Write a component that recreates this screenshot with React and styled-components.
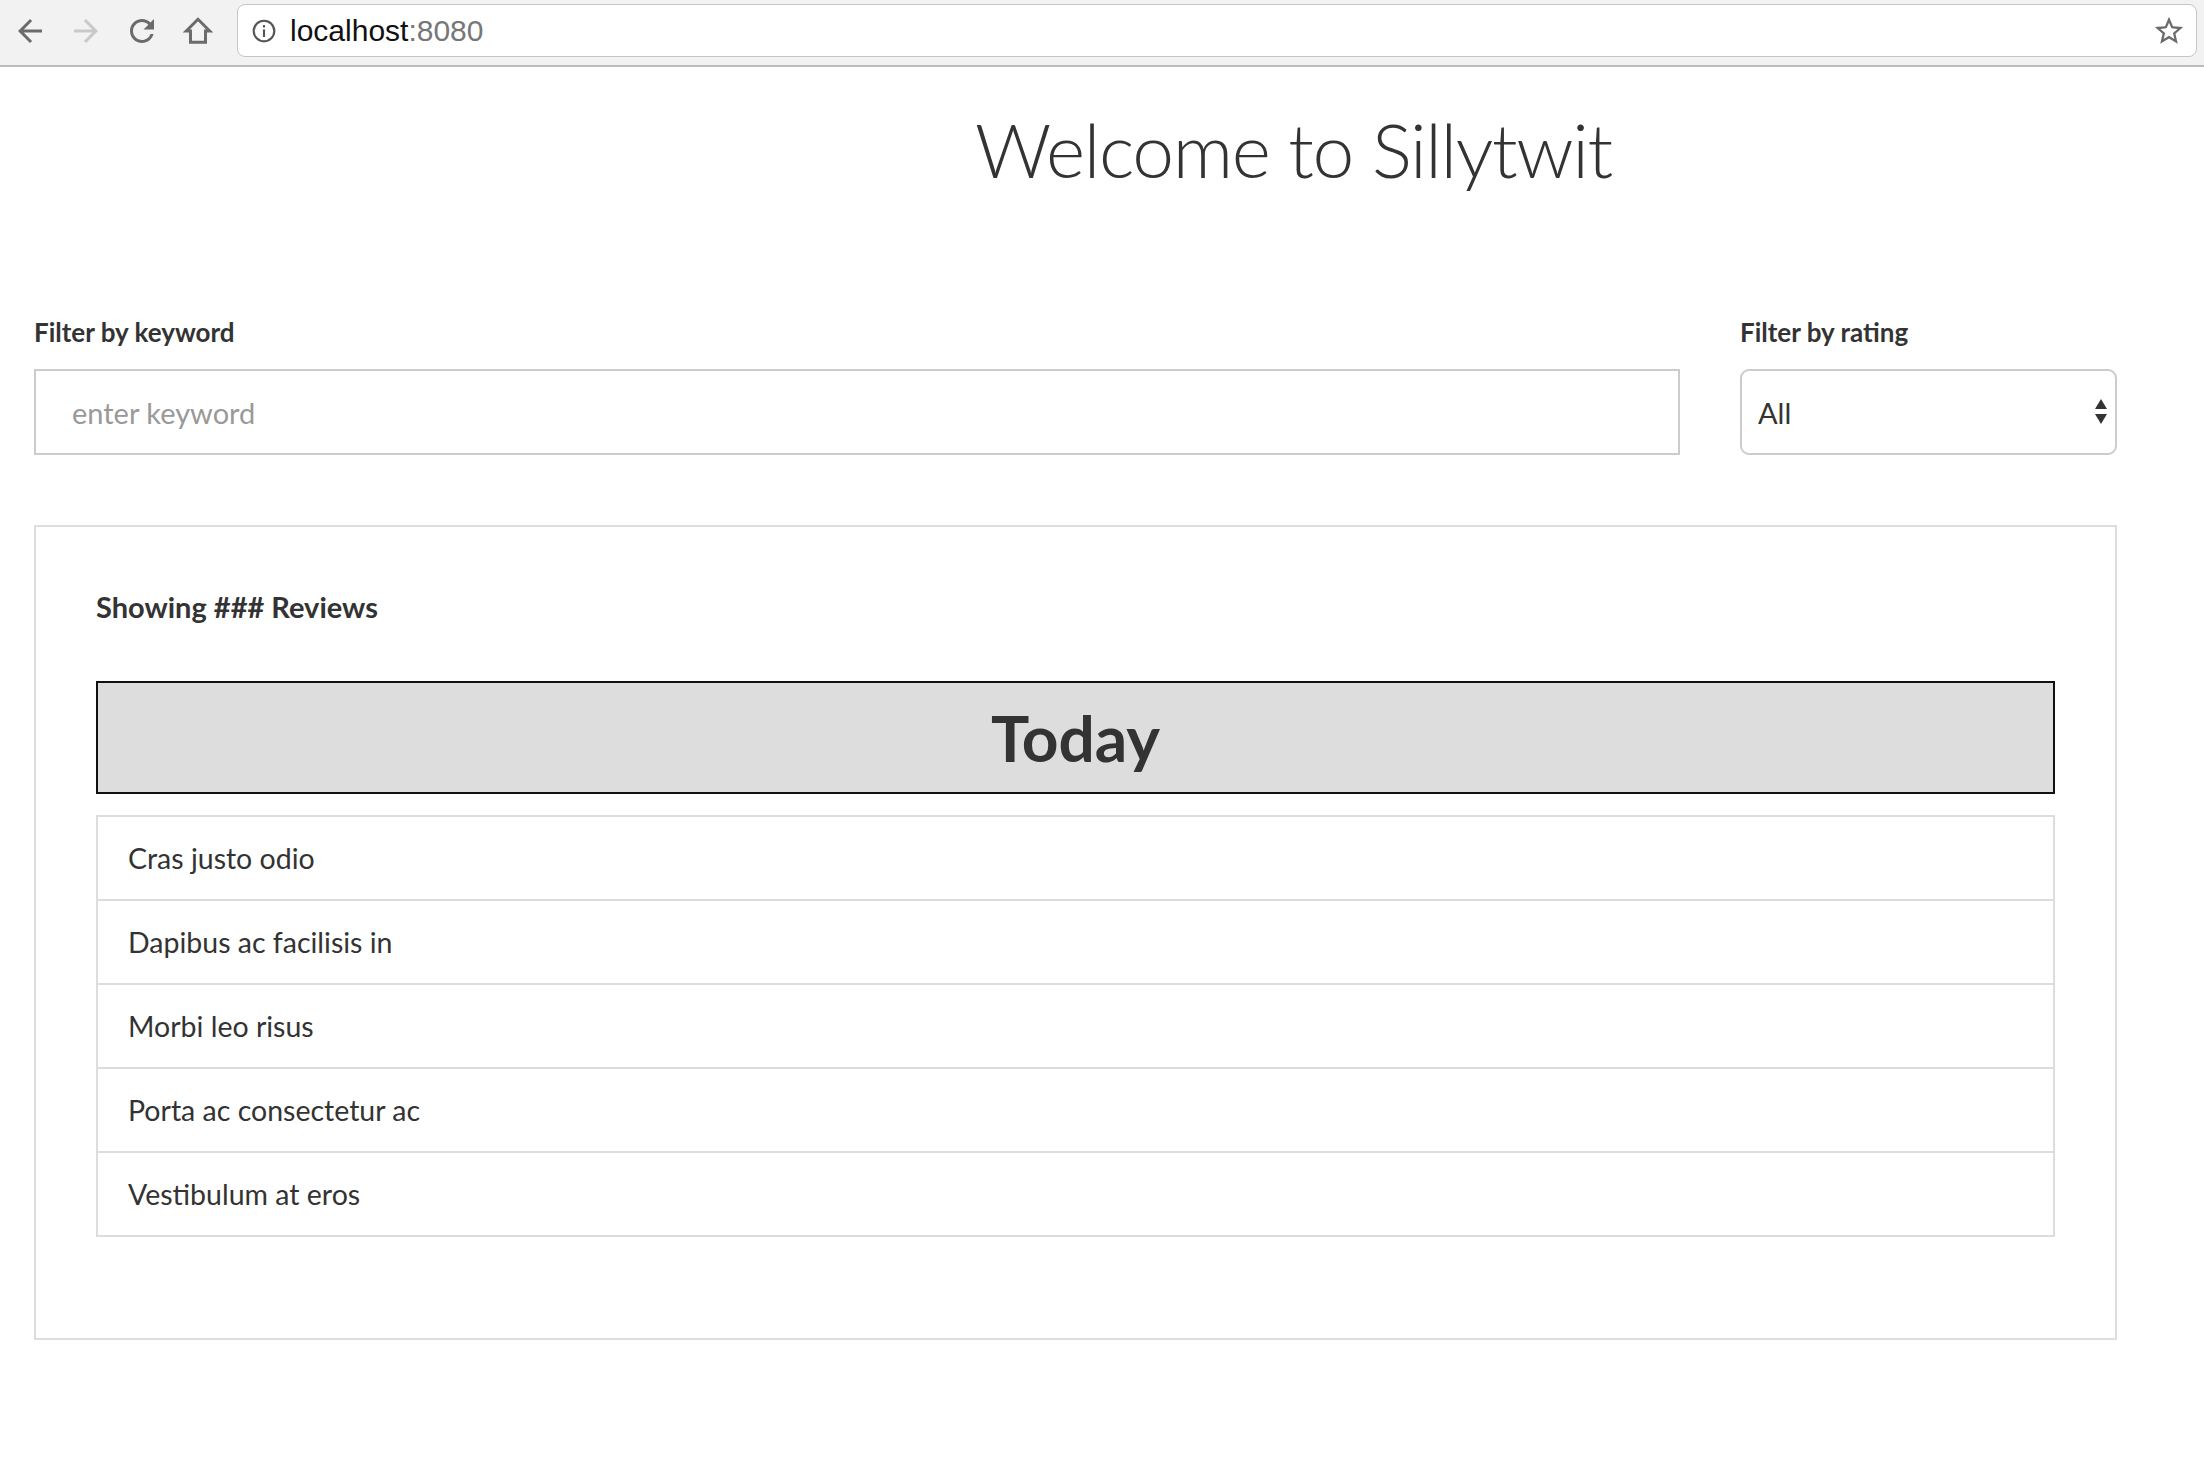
import React from "react"
import styled, { createGlobalStyle } from "styled-components"

const GlobalStyle = createGlobalStyle`
  html, body {
    margin: 0;
    padding: 0;
    background: #fff;
  }
  body {
    font-family: Lato, "Open Sans", sans-serif;
    color: #333;
  }
  * {
    box-sizing: border-box;
  }
`

const Chrome = styled.div`
  display: flex;
  align-items: center;
  height: 67px;
  padding: 0 7px 4px 10px;
  background: #f2f2f2;
  border-bottom: 2px solid #bcbcbc;
`

const NavButton = styled.div`
  display: flex;
  align-items: center;
  justify-content: center;
  width: 40px;
  height: 40px;
  margin-right: 16px;
  color: ${props => (props.disabled ? "#c9c9c9" : "#6b6b6b")};
`

const UrlBar = styled.div`
  flex: 1;
  display: flex;
  align-items: center;
  height: 53px;
  margin-left: 3px;
  padding: 0 10px 0 13px;
  background: #fff;
  border: 1.5px solid #c6c6c6;
  border-radius: 8px;
  font-family: "Liberation Sans", Arial, sans-serif;
  font-size: 30px;
`

const Host = styled.span`
  margin-left: 13px;
  color: #111;
`

const Port = styled.span`
  color: #777;
`

const Spacer = styled.div`
  flex: 1;
`

const Main = styled.main`
  width: 2083px;
  margin-left: 34px;
`

const Title = styled.h1`
  margin: 41px 0 0;
  padding-left: 941px;
  font-family: Lato, sans-serif;
  font-size: 75px;
  font-weight: 300;
  letter-spacing: -1.4px;
  line-height: 1.1;
  color: #333;
`

const Filters = styled.div`
  display: grid;
  grid-template-columns: 1fr 377px;
  column-gap: 60px;
  margin-top: 127px;
`

const Field = styled.div`
  display: flex;
  flex-direction: column;
`

const Label = styled.label`
  margin-bottom: 23px;
  font-size: 26px;
  font-weight: 700;
  line-height: 1.1;
  color: #333;
`

const TextInput = styled.input`
  height: 86px;
  padding: 0 36px;
  border: 2px solid #ccc;
  border-radius: 0;
  outline: none;
  font-family: Lato, sans-serif;
  font-size: 29px;
  color: #333;

  &::placeholder {
    color: #999;
  }
`

const SelectBox = styled.div`
  display: flex;
  align-items: center;
  justify-content: space-between;
  height: 86px;
  padding: 0 8px 0 16px;
  border: 2px solid #ccc;
  border-radius: 9px;
  font-size: 29px;
  color: #333;
`

const Card = styled.section`
  margin-top: 70px;
  padding: 64px 60px 63px;
  border: 2px solid #ddd;
`

const Count = styled.h4`
  margin: 0 0 58px;
  font-size: 29px;
  font-weight: 700;
  line-height: 1.1;
  color: #333;
`

const DayHeader = styled.div`
  display: flex;
  align-items: center;
  justify-content: center;
  height: 113px;
  margin-bottom: 21px;
  background: #ddd;
  border: 2px solid #111;
  font-size: 64px;
  font-weight: 700;
  color: #333;
`

const List = styled.ul`
  margin: 0 0 40px;
  padding: 0;
  list-style: none;
`

const Item = styled.li`
  display: flex;
  align-items: center;
  height: 86px;
  margin-bottom: -2px;
  padding: 0 30px;
  border: 2px solid #ddd;
  font-size: 28.5px;
  color: #333;
`

const Icon = ({ size = 36, children, ...rest }) => (
  <svg width={size} height={size} viewBox="0 0 24 24" fill="currentColor" {...rest}>
    {children}
  </svg>
)

const reviews = [
  "Cras justo odio",
  "Dapibus ac facilisis in",
  "Morbi leo risus",
  "Porta ac consectetur ac",
  "Vestibulum at eros",
]

const App = () => {
  return (
    <>
      <GlobalStyle />
      <Chrome>
        <NavButton>
          <Icon>
            <path d="M20 11H7.83l5.59-5.59L12 4l-8 8 8 8 1.41-1.41L7.83 13H20v-2z" />
          </Icon>
        </NavButton>
        <NavButton disabled>
          <Icon>
            <path d="M4 11h12.17l-5.59-5.59L12 4l8 8-8 8-1.41-1.41L16.17 13H4v-2z" />
          </Icon>
        </NavButton>
        <NavButton>
          <Icon>
            <path d="M17.65 6.35C16.2 4.9 14.21 4 12 4c-4.42 0-7.99 3.58-7.99 8s3.57 8 7.99 8c3.73 0 6.84-2.55 7.73-6h-2.08c-.82 2.33-3.04 4-5.65 4-3.31 0-6-2.69-6-6s2.69-6 6-6c1.66 0 3.14.69 4.22 1.78L13 11h7V4l-2.35 2.35z" />
          </Icon>
        </NavButton>
        <NavButton>
          <Icon>
            <path
              d="M12 4.2 L4.2 12 H7 V19.5 H17 V12 H19.8 Z"
              fill="none"
              stroke="currentColor"
              strokeWidth="2"
              strokeLinejoin="miter"
            />
          </Icon>
        </NavButton>
        <UrlBar>
          <Icon size={26} style={{ color: "#555" }}>
            <circle cx="12" cy="12" r="9.5" fill="none" stroke="currentColor" strokeWidth="2" />
            <rect x="11" y="10.5" width="2" height="7" />
            <rect x="11" y="6.5" width="2" height="2.2" />
          </Icon>
          <Host>
            localhost<Port>:8080</Port>
          </Host>
          <Spacer />
          <Icon size={34} style={{ color: "#6b6b6b" }}>
            <path d="M22 9.24l-7.19-.62L12 2 9.19 8.63 2 9.24l5.46 4.73L5.82 21 12 17.27 18.18 21l-1.63-7.03L22 9.24zM12 15.4l-3.76 2.27 1-4.28-3.32-2.88 4.38-.38L12 6.1l1.71 4.04 4.38.38-3.32 2.88 1 4.28L12 15.4z" />
          </Icon>
        </UrlBar>
      </Chrome>

      <Main>
        <Title>Welcome to Sillytwit</Title>

        <Filters>
          <Field>
            <Label>Filter by keyword</Label>
            <TextInput placeholder="enter keyword" />
          </Field>
          <Field>
            <Label>Filter by rating</Label>
            <SelectBox>
              <span>All</span>
              <svg width="12" height="30" viewBox="0 0 12 30" fill="#333">
                <path d="M6 2 L12 12 H0 Z" />
                <path d="M0 17 H12 L6 27 Z" />
              </svg>
            </SelectBox>
          </Field>
        </Filters>

        <Card>
          <Count>Showing ### Reviews</Count>
          <DayHeader>Today</DayHeader>
          <List>
            {reviews.map(text => (
              <Item key={text}>{text}</Item>
            ))}
          </List>
        </Card>
      </Main>
    </>
  )
}

export default App
